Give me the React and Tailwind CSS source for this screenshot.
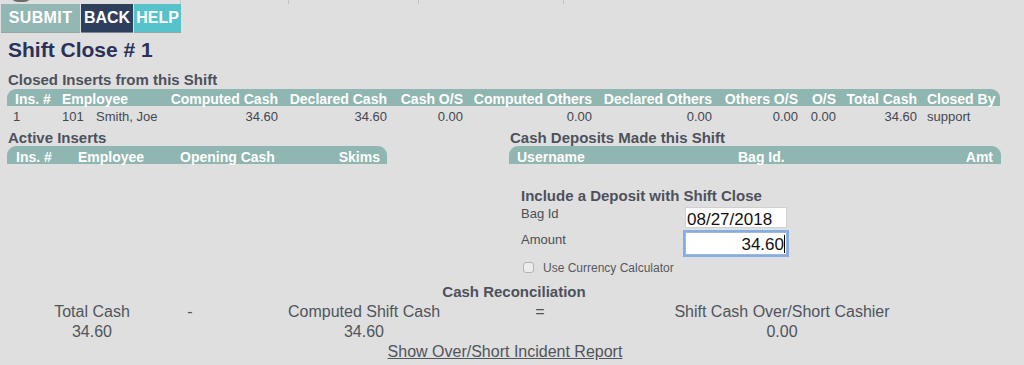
import React from 'react'

const closedHead = [
    ['Ins. #', 'text-left pl-[2px]'],
    ['Employee', 'text-left'],
    ['Computed Cash', 'text-right'],
    ['Declared Cash', 'text-right'],
    ['Cash O/S', 'text-right'],
    ['Computed Others', 'text-right'],
    ['Declared Others', 'text-right'],
    ['Others O/S', 'text-right'],
    ['O/S', 'text-right'],
    ['Total Cash', 'text-right'],
    ['Closed By', 'text-left pl-[10px]'],
]

const closedRow = ['34.60', '34.60', '0.00', '0.00', '0.00', '0.00', '0.00', '34.60']

const cols = 'grid grid-cols-[49px_98px_118px_109px_76px_129px_120px_86px_38px_81px_83px]'

const SectionTitle = ({ children, className = '' }) => (
    <div className={`text-[15px] leading-[17px] font-bold text-[#4d515c] ${className}`}>{children}</div>
)

const App = () => {
    return (
        <div className="min-h-[365px] bg-[#dfdfdf] font-['Liberation_Sans',Arial,sans-serif] text-[#3f434c] overflow-hidden">
            {/* top nav strip, mostly cut off */}
            <div className="flex h-[4px]">
                <div className="w-[180px] relative">
                    <div className="absolute left-[10px] top-[-6px] w-[22px] h-[8px] rounded-b-full border-b-2 border-[#6b6b6b]" />
                </div>
                <div className="w-[108px] border-l border-[#c4c4c4]" />
                <div className="w-[130px] border-l border-[#c4c4c4]" />
                <div className="w-[145px] border-l border-[#c4c4c4]" />
                <div className="flex-1 border-l border-[#c4c4c4]" />
            </div>

            {/* action buttons */}
            <div className="flex pl-[1px] h-[29px] text-white font-bold text-[16px]">
                <button className="w-[79px] bg-[#93b7b3] border-b border-[#9aa4a3] tracking-[0.4px]">SUBMIT</button>
                <button className="w-[52px] ml-[1px] bg-[#2e3f5d] border-b border-[#7f8590]">BACK</button>
                <button className="w-[47px] ml-[1px] bg-[#56c2ca] border-b border-[#9aa4a3]">HELP</button>
            </div>

            <h1 className="ml-[8px] mt-[5px] text-[21px] leading-[24px] font-bold text-[#2b3159]">Shift Close # 1</h1>

            {/* closed inserts */}
            <SectionTitle className="ml-[8px] mt-[9px]">Closed Inserts from this Shift</SectionTitle>
            <div className="ml-[7px] w-[993px] mt-[1px]">
                <div className={`${cols} pl-[6px] h-[17px] items-center bg-[#8fb6b0] rounded-t-[9px] text-white text-[14px] font-bold`}>
                    {closedHead.map(([h, c]) => (
                        <div key={h} className={`${c} whitespace-nowrap`}>{h}</div>
                    ))}
                </div>
                <div className={`${cols} pl-[6px] h-[21px] items-center text-[13px] text-[#444851]`}>
                    <div>1</div>
                    <div className="flex">
                        <span className="w-[34px]">101</span>
                        <span>Smith, Joe</span>
                    </div>
                    {closedRow.map((v, i) => (
                        <div key={i} className="text-right">{v}</div>
                    ))}
                    <div className="pl-[10px]">support</div>
                </div>
            </div>

            {/* active inserts / deposits */}
            <div className="ml-[7px] w-[994px] mt-[2px] flex justify-between items-start">
                <div className="w-[380px]">
                    <SectionTitle className="ml-[1px]">Active Inserts</SectionTitle>
                    <div className="h-[18px] pt-[1px] grid grid-cols-[62px_102px_1fr_auto] items-center pl-[9px] pr-[7px] bg-[#8fb6b0] rounded-t-[9px] text-white text-[14px] font-bold">
                        <div>Ins. #</div>
                        <div>Employee</div>
                        <div>Opening Cash</div>
                        <div>Skims</div>
                    </div>
                </div>

                <div className="w-[492px]">
                    <SectionTitle className="ml-[1px]">Cash Deposits Made this Shift</SectionTitle>
                    <div className="h-[18px] pt-[1px] grid grid-cols-[221px_1fr_auto] items-center pl-[8px] pr-[8px] bg-[#8fb6b0] rounded-t-[9px] text-white text-[14px] font-bold">
                        <div>Username</div>
                        <div>Bag Id.</div>
                        <div>Amt</div>
                    </div>

                    <div className="ml-[12px] mt-[23px]">
                        <SectionTitle>Include a Deposit with Shift Close</SectionTitle>
                        <div className="mt-[3px] flex items-start">
                            <label className="w-[164px] text-[13px] leading-[14px] text-[#4a4e57]">Bag Id</label>
                            <div className="w-[102px] h-[21px] pl-[1px] pt-[3px] bg-white border border-[#d0d0d0] text-[17px] leading-[17px] text-[#111] whitespace-nowrap">
                                08/27/2018
                            </div>
                        </div>
                        <div className="mt-[4px] flex items-start">
                            <label className="w-[164px] text-[13px] leading-[15px] text-[#4a4e57]">Amount</label>
                            <div className="w-[102px] h-[23px] pr-[1px] pt-[3px] bg-white border border-[#9fb8d9] ring-[2px] ring-[#84ade3] text-[17px] leading-[17px] text-[#111] flex justify-end items-start">
                                <span>34.60</span>
                                <span className="w-[1px] h-[18px] mt-[-1px] bg-black" />
                            </div>
                        </div>
                        <label className="mt-[7px] h-[11px] flex items-center gap-[9px] text-[12px] leading-[14px] text-[#555961]">
                            <span className="ml-[2px] w-[11px] h-[11px] rounded-[3px] border border-[#b4b4b4] bg-[#ececec]" />
                            Use Currency Calculator
                        </label>
                    </div>
                </div>
            </div>

            {/* reconciliation */}
            <div className="mt-[10px] pl-[4px] text-center text-[15px] leading-[17px] font-bold text-[#4d515c]">Cash Reconciliation</div>
            <div className="mt-[2px] ml-[20px] grid grid-cols-[144px_52px_296px_56px_428px] text-center text-[16px] leading-[20px] text-[#50545c]">
                <div>Total Cash</div>
                <div>-</div>
                <div>Computed Shift Cash</div>
                <div>=</div>
                <div>Shift Cash Over/Short Cashier</div>
                <div>34.60</div>
                <div />
                <div>34.60</div>
                <div />
                <div>0.00</div>
            </div>
            <div className="pr-[14px] text-center text-[16px] leading-[20px]">
                <a href="#" className="underline text-[#50545c]">Show Over/Short Incident Report</a>
            </div>
        </div>
    )
}

export default App
